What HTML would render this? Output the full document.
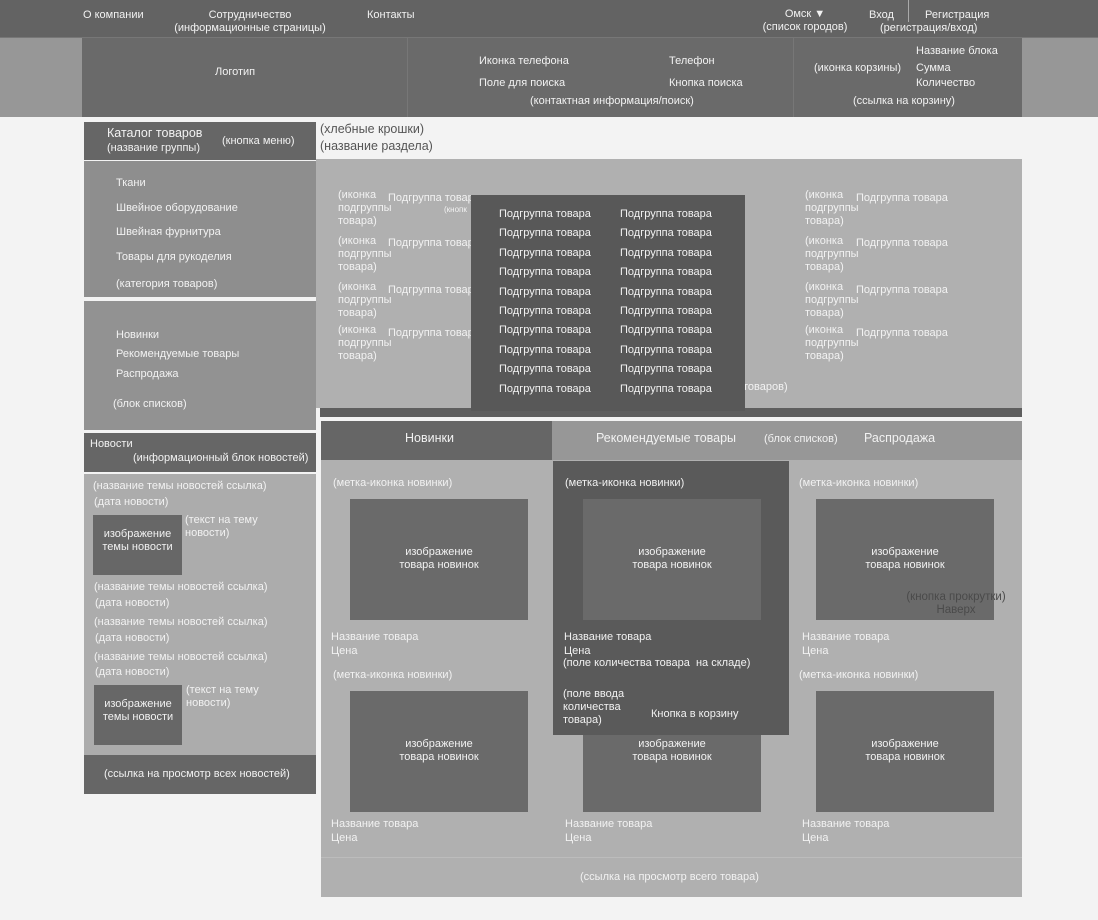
<!DOCTYPE html>
<html><head><meta charset="utf-8"><style>
*{margin:0;padding:0;box-sizing:border-box}
body{width:1098px;height:920px;background:#f3f3f3;position:relative;overflow:hidden;font-family:"Liberation Sans","Noto Sans CJK SC",sans-serif;font-size:11px;color:#f2f2f2}
div,span{position:absolute}
.c{text-align:center}
.t{white-space:nowrap;line-height:13px}
</style></head><body>
<div style="left:0;top:0;width:1098px;height:37px;background:#636363"></div>
<div style="left:0;top:37px;width:1098px;height:1px;background:#777"></div>
<span class="t" style="left:83px;top:9px">О компании</span>
<span class="t c" style="left:160px;top:9px;width:180px">Сотрудничество<br>(информационные страницы)</span>
<span class="t" style="left:367px;top:9px">Контакты</span>
<span class="t c" style="left:755px;top:8px;width:100px">Омск ▼<br>(список городов)</span>
<span class="t" style="left:869px;top:9px">Вход</span>
<div style="left:908px;top:0;width:1px;height:22px;background:#aaa"></div>
<span class="t" style="left:925px;top:9px">Регистрация</span>
<span class="t" style="left:880px;top:22px">(регистрация/вход)</span>
<div style="left:0;top:38px;width:1098px;height:79px;background:#979797"></div>
<div style="left:82px;top:38px;width:940px;height:79px;background:#6a6a6a"></div>
<div style="left:407px;top:38px;width:1px;height:79px;background:#777"></div>
<div style="left:793px;top:38px;width:1px;height:79px;background:#777"></div>
<span class="t" style="left:215px;top:66px">Логотип</span>
<span class="t" style="left:479px;top:55px">Иконка телефона</span>
<span class="t" style="left:479px;top:77px">Поле для поиска</span>
<span class="t" style="left:669px;top:55px">Телефон</span>
<span class="t" style="left:669px;top:77px">Кнопка поиска</span>
<span class="t" style="left:530px;top:95px">(контактная информация/поиск)</span>
<span class="t" style="left:814px;top:62px">(иконка корзины)</span>
<span class="t" style="left:916px;top:45px">Название блока</span>
<span class="t" style="left:916px;top:62px">Сумма</span>
<span class="t" style="left:916px;top:77px">Количество</span>
<span class="t" style="left:853px;top:95px">(ссылка на корзину)</span>
<div style="left:84px;top:122px;width:232px;height:38px;background:#666"></div>
<span class="t" style="left:107px;top:127px;font-size:12.5px">Каталог товаров</span>
<span class="t" style="left:107px;top:142px">(название группы)</span>
<span class="t" style="left:222px;top:135px">(кнопка меню)</span>
<div style="left:84px;top:161px;width:232px;height:136px;background:#8e8e8e"></div>
<span class="t" style="left:116px;top:177px">Ткани</span>
<span class="t" style="left:116px;top:202px">Швейное оборудование</span>
<span class="t" style="left:116px;top:226px">Швейная фурнитура</span>
<span class="t" style="left:116px;top:251px">Товары для рукоделия</span>
<span class="t" style="left:116px;top:278px">(категория товаров)</span>
<div style="left:84px;top:301px;width:232px;height:129px;background:#929292"></div>
<span class="t" style="left:116px;top:329px">Новинки</span>
<span class="t" style="left:116px;top:348px">Рекомендуемые товары</span>
<span class="t" style="left:116px;top:368px">Распродажа</span>
<span class="t" style="left:113px;top:398px">(блок списков)</span>
<div style="left:84px;top:433px;width:232px;height:39px;background:#666"></div>
<span class="t" style="left:90px;top:438px">Новости</span>
<span class="t" style="left:133px;top:452px">(информационный блок новостей)</span>
<div style="left:84px;top:474px;width:232px;height:281px;background:#acacac"></div>
<span class="t" style="left:93px;top:480px">(название темы новостей ссылка)</span>
<span class="t" style="left:94px;top:496px">(дата новости)</span>
<div style="left:93px;top:515px;width:89px;height:60px;background:#676767"></div>
<span class="t c" style="left:93px;top:528px;width:89px">изображение<br>темы новости</span>
<span class="t" style="left:185px;top:514px">(текст на тему<br>новости)</span>
<span class="t" style="left:94px;top:581px">(название темы новостей ссылка)</span>
<span class="t" style="left:95px;top:597px">(дата новости)</span>
<span class="t" style="left:94px;top:616px">(название темы новостей ссылка)</span>
<span class="t" style="left:95px;top:632px">(дата новости)</span>
<span class="t" style="left:94px;top:651px">(название темы новостей ссылка)</span>
<span class="t" style="left:95px;top:666px">(дата новости)</span>
<div style="left:94px;top:685px;width:88px;height:60px;background:#676767"></div>
<span class="t c" style="left:94px;top:698px;width:88px">изображение<br>темы новости</span>
<span class="t" style="left:186px;top:684px">(текст на тему<br>новости)</span>
<div style="left:84px;top:755px;width:232px;height:39px;background:#666"></div>
<span class="t" style="left:104px;top:768px">(ссылка на просмотр всех новостей)</span>
<span class="t" style="left:320px;top:123px;font-size:12.5px;color:#555">(хлебные крошки)</span>
<span class="t" style="left:320px;top:140px;font-size:12.5px;color:#555">(название раздела)</span>
<div style="left:316px;top:159px;width:706px;height:249px;background:#b0b0b0"></div>
<div style="left:316px;top:408px;width:706px;height:9px;background:#5e5e5e"></div>
<div style="left:316px;top:408px;width:4px;height:9px;background:#f3f3f3"></div>
<span class="t" style="left:338px;top:189px;line-height:13px">(иконка<br>подгруппы<br>товара)</span>
<span class="t" style="left:388px;top:192px">Подгруппа товара</span>
<span class="t" style="left:444px;top:203px;font-size:8px">(кнопк</span>
<span class="t" style="left:338px;top:235px">(иконка<br>подгруппы<br>товара)</span>
<span class="t" style="left:388px;top:237px">Подгруппа товара</span>
<span class="t" style="left:338px;top:281px">(иконка<br>подгруппы<br>товара)</span>
<span class="t" style="left:388px;top:284px">Подгруппа товара</span>
<span class="t" style="left:338px;top:324px">(иконка<br>подгруппы<br>товара)</span>
<span class="t" style="left:388px;top:327px">Подгруппа товара</span>
<span class="t" style="left:805px;top:189px">(иконка<br>подгруппы<br>товара)</span>
<span class="t" style="left:856px;top:192px">Подгруппа товара</span>
<span class="t" style="left:805px;top:235px">(иконка<br>подгруппы<br>товара)</span>
<span class="t" style="left:856px;top:237px">Подгруппа товара</span>
<span class="t" style="left:805px;top:281px">(иконка<br>подгруппы<br>товара)</span>
<span class="t" style="left:856px;top:284px">Подгруппа товара</span>
<span class="t" style="left:805px;top:324px">(иконка<br>подгруппы<br>товара)</span>
<span class="t" style="left:856px;top:327px">Подгруппа товара</span>
<span class="t" style="left:743px;top:381px">товаров)</span>
<div style="left:471px;top:195px;width:274px;height:216px;background:#585858"></div>
<span class="t" style="left:499px;top:205px;line-height:19.4px">Подгруппа товара<br>Подгруппа товара<br>Подгруппа товара<br>Подгруппа товара<br>Подгруппа товара<br>Подгруппа товара<br>Подгруппа товара<br>Подгруппа товара<br>Подгруппа товара<br>Подгруппа товара</span>
<span class="t" style="left:620px;top:205px;line-height:19.4px">Подгруппа товара<br>Подгруппа товара<br>Подгруппа товара<br>Подгруппа товара<br>Подгруппа товара<br>Подгруппа товара<br>Подгруппа товара<br>Подгруппа товара<br>Подгруппа товара<br>Подгруппа товара</span>
<div style="left:321px;top:421px;width:701px;height:476px;background:#b0b0b0"></div>
<div style="left:321px;top:421px;width:231px;height:39px;background:#666"></div>
<div style="left:552px;top:421px;width:470px;height:39px;background:#979797"></div>
<span class="t" style="left:405px;top:432px;font-size:12.5px">Новинки</span>
<span class="t" style="left:596px;top:432px;font-size:12.5px">Рекомендуемые товары</span>
<span class="t" style="left:764px;top:433px">(блок списков)</span>
<span class="t" style="left:864px;top:432px;font-size:12.5px">Распродажа</span>
<div style="left:321px;top:857px;width:701px;height:1px;background:#bcbcbc"></div>
<span class="t" style="left:580px;top:871px">(ссылка на просмотр всего товара)</span>
<span class="t" style="left:333px;top:477px">(метка-иконка новинки)</span>
<div style="left:350px;top:499px;width:178px;height:121px;background:#6a6a6a"></div>
<span class="t c" style="left:350px;top:546px;width:178px">изображение<br>товара новинок</span>
<span class="t" style="left:331px;top:630px;line-height:14px">Название товара<br>Цена</span>
<span class="t" style="left:333px;top:669px">(метка-иконка новинки)</span>
<div style="left:350px;top:691px;width:178px;height:121px;background:#6a6a6a"></div>
<span class="t c" style="left:350px;top:738px;width:178px">изображение<br>товара новинок</span>
<span class="t" style="left:331px;top:817px;line-height:14px">Название товара<br>Цена</span>
<div style="left:583px;top:691px;width:178px;height:121px;background:#6a6a6a"></div>
<span class="t c" style="left:583px;top:738px;width:178px">изображение<br>товара новинок</span>
<span class="t" style="left:565px;top:817px;line-height:14px">Название товара<br>Цена</span>
<div style="left:553px;top:461px;width:236px;height:274px;background:#5a5a5a"></div>
<span class="t" style="left:565px;top:477px">(метка-иконка новинки)</span>
<div style="left:583px;top:499px;width:178px;height:121px;background:#6a6a6a"></div>
<span class="t c" style="left:583px;top:546px;width:178px">изображение<br>товара новинок</span>
<span class="t" style="left:564px;top:630px;line-height:14px">Название товара<br>Цена</span>
<span class="t" style="left:563px;top:657px">(поле количества товара &nbsp;на складе)</span>
<span class="t" style="left:563px;top:688px">(поле ввода<br>количества<br>товара)</span>
<span class="t" style="left:651px;top:708px">Кнопка в корзину</span>
<span class="t" style="left:799px;top:477px">(метка-иконка новинки)</span>
<div style="left:816px;top:499px;width:178px;height:121px;background:#6a6a6a"></div>
<span class="t c" style="left:816px;top:546px;width:178px">изображение<br>товара новинок</span>
<span class="t c" style="left:896px;top:591px;width:120px;color:#4a4a4a;font-size:11.5px">(кнопка прокрутки)<br>Наверх</span>
<span class="t" style="left:802px;top:630px;line-height:14px">Название товара<br>Цена</span>
<span class="t" style="left:799px;top:669px">(метка-иконка новинки)</span>
<div style="left:816px;top:691px;width:178px;height:121px;background:#6a6a6a"></div>
<span class="t c" style="left:816px;top:738px;width:178px">изображение<br>товара новинок</span>
<span class="t" style="left:802px;top:817px;line-height:14px">Название товара<br>Цена</span>
</body></html>
